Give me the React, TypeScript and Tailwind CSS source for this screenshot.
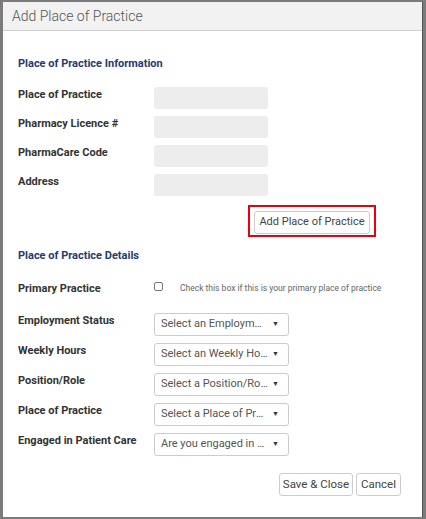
import { ReactElement } from 'react'

const FONT = "font-['Roboto',_'Liberation_Sans',_sans-serif]"

function Label({ children }: { children: string }): ReactElement {
    return <span className="w-[136px] shrink-0 text-[11px] leading-[16px] font-bold text-[#333]">{children}</span>
}

function TextRow({ label }: { label: string }): ReactElement {
    return (
        <div className="flex items-start">
            <Label>{label}</Label>
            <div className="h-[22px] w-[114px] rounded-[3px] bg-[#ededed]" />
        </div>
    )
}

function SelectRow({ label, placeholder }: { label: string; placeholder: string }): ReactElement {
    return (
        <div className="flex items-start">
            <Label>{label}</Label>
            <div className="flex h-[23px] w-[135px] items-center justify-between gap-[3px] rounded-[3px] border border-[#ccc] bg-white pr-[9px] pl-[6px]">
                <span className="truncate text-[11px] text-[#555]">{placeholder}</span>
                <span className="shrink-0 text-[7px] text-[#333]">▼</span>
            </div>
        </div>
    )
}

export default function App(): ReactElement {
    return (
        <div className={`h-[519px] w-[426px] overflow-hidden bg-[#7b7b7b] pt-[2px] pl-[3px] ${FONT}`}>
            <div className="h-[515px] w-[420px] border-r border-[#555] bg-white">
                <div className="flex h-[29px] items-center border-b border-[#cfcfcf] bg-[#f2f2f2] pl-[9px]">
                    <span className="text-[14px] font-light text-[#555]">Add Place of Practice</span>
                </div>

                <div className="px-[15px]">
                    <h2 className="mt-[25px] text-[11px] leading-[16px] font-bold text-[#1e3a78]">
                        Place of Practice Information
                    </h2>

                    <div className="mt-[15px] flex flex-col gap-[7px]">
                        <TextRow label="Place of Practice" />
                        <TextRow label="Pharmacy Licence #" />
                        <TextRow label="PharmaCare Code" />
                        <TextRow label="Address" />
                    </div>

                    <div className="mt-[9px] ml-[230px] w-fit border-2 border-[#e8000b] px-[4px] py-[1px]">
                        <button className="h-[23px] w-[116px] rounded-[3px] border border-[#ccc] bg-white text-[11px] text-[#444]">
                            Add Place of Practice
                        </button>
                    </div>

                    <h2 className="mt-[11px] text-[11px] leading-[16px] font-bold text-[#1e3a78]">
                        Place of Practice Details
                    </h2>

                    <div className="mt-[17px] flex items-center">
                        <Label>Primary Practice</Label>
                        <span className="mb-[4px] h-[9px] w-[9px] rounded-[2px] border border-[#777] bg-white" />
                        <span className="ml-[17px] text-[8.5px] text-[#666]">
                            Check this box if this is your primary place of practice
                        </span>
                    </div>

                    <div className="mt-[16px] flex flex-col gap-[7px]">
                        <SelectRow label="Employment Status" placeholder="Select an Employm…" />
                        <SelectRow label="Weekly Hours" placeholder="Select an Weekly Ho…" />
                        <SelectRow label="Position/Role" placeholder="Select a Position/Ro…" />
                        <SelectRow label="Place of Practice" placeholder="Select a Place of Pra…" />
                        <SelectRow label="Engaged in Patient Care" placeholder="Are you engaged in …" />
                    </div>

                    <div className="mt-[17px] mr-[6px] flex justify-end gap-[3px]">
                        <button className="h-[23px] w-[74px] rounded-[3px] border border-[#ccc] bg-white text-[11.5px] text-[#444]">
                            Save &amp; Close
                        </button>
                        <button className="h-[23px] w-[45px] rounded-[3px] border border-[#ccc] bg-white text-[11.5px] text-[#444]">
                            Cancel
                        </button>
                    </div>
                </div>
            </div>
        </div>
    )
}
